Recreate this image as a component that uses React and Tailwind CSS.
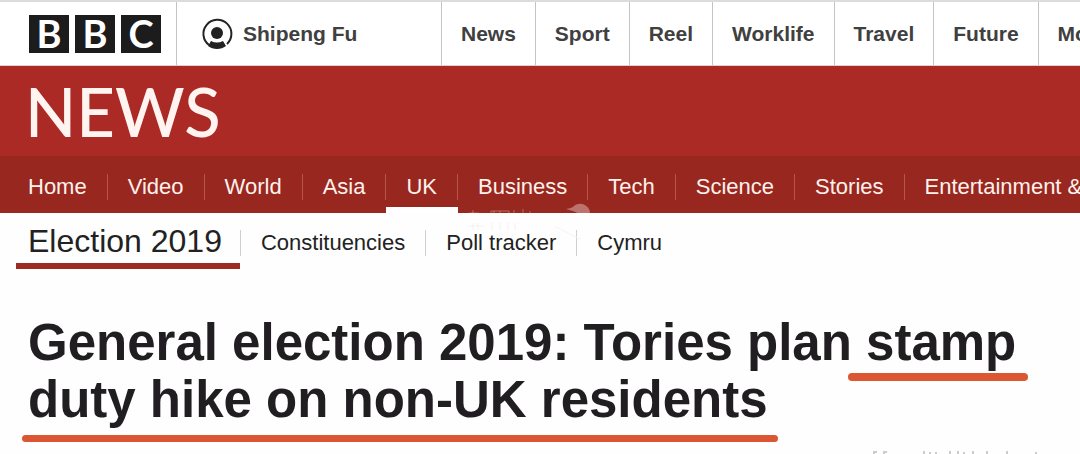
import clsx from 'clsx';

const siteLinks = ['News', 'Sport', 'Reel', 'Worklife', 'Travel', 'Future', 'More'];

const sections = [
  'Home',
  'Video',
  'World',
  'Asia',
  'UK',
  'Business',
  'Tech',
  'Science',
  'Stories',
  'Entertainment & Arts',
];

const topics = ['Constituencies', 'Poll tracker', 'Cymru'];

function AccountIcon() {
  return (
    <svg width="32" height="32" viewBox="0 0 32 32" aria-hidden="true">
      <path
        d="M8 27A14 14 0 1 1 26 26"
        fill="none"
        stroke="#222"
        strokeWidth="2"
      />
      <circle cx="16" cy="15" r="6" fill="#222" />
      <path d="M7 28l3-5c4 2 8 2 12 0l3 5c-5 4-13 4-18 0z" fill="#222" />
    </svg>
  );
}

// faint bird and lettering stamped over the nav
function Watermark() {
  return (
    <svg
      className="pointer-events-none absolute top-[135px] left-[465px]"
      width="140"
      height="45"
      viewBox="0 0 140 45"
      aria-hidden="true"
    >
      <path
        d="M101 8c4-.5 6-1 8-3 5-4 12-2 15 3 2 4 1 9-2 13-3 3-7 4-10 3 4-2 5-6 3-9-2-4-7-5-14-7z"
        fill="#fff"
        opacity="0.35"
      />
      <path
        d="M8 12v-3M4 12h10M26 12v-2h18v2M29 12v-2M35 12v-2M49 12v-3M58 12v-4M65 12v-2"
        fill="none"
        stroke="#fff"
        opacity="0.3"
      />
      <path
        d="M3 25h16M8 22v7M13 22v7M27 22v7M35 22v7M43 22v7M50 22v7"
        fill="none"
        stroke="#f4f1f1"
      />
      <path d="M90 26c10 3 14 8 26 12" fill="none" stroke="#f6f4f4" />
    </svg>
  );
}

function SiteBar() {
  return (
    <header className="flex h-[66px] overflow-hidden border-t-2 border-b border-t-[#dcdcdc] border-b-[#e2cfcd] bg-white">
      <a
        href="#home"
        aria-label="BBC home"
        className="flex w-[177px] shrink-0 items-center gap-[6px] border-r border-[#c4c4c4] pl-[29px]"
      >
        {['B', 'B', 'C'].map((letter, i) => (
          <span
            key={i}
            className="flex h-[38px] w-10 items-center justify-center bg-[#1c1c1c] pb-px font-['Lato',sans-serif] text-[38px] leading-[38px] font-bold text-white"
          >
            {letter}
          </span>
        ))}
      </a>
      <a
        href="#account"
        className="flex w-[265px] shrink-0 items-center gap-[10px] border-r border-[#c4c4c4] pl-6 text-[21px] font-bold text-[#404040]"
      >
        <AccountIcon />
        Shipeng Fu
      </a>
      <nav aria-label="BBC" className="flex">
        {siteLinks.map((label) => (
          <a
            key={label}
            href="#site"
            className="flex shrink-0 items-center border-r border-[#c4c4c4] px-[19px] text-[21px] font-bold text-[#404040]"
          >
            {label}
          </a>
        ))}
      </nav>
    </header>
  );
}

function SectionNav() {
  return (
    <nav aria-label="Sections" className="flex h-[57px] overflow-hidden bg-[#98271f] pt-1 pl-2">
      {sections.map((label) => (
        <a
          key={label}
          href="#section"
          aria-current={label === 'UK' ? 'page' : undefined}
          className={clsx(
            'flex shrink-0 items-center border-b-6 pt-[6px] text-[22px] whitespace-nowrap text-[#fff1ec]',
            label === 'UK' ? 'border-white' : 'border-transparent'
          )}
        >
          <span className="px-5 leading-[26px]">{label}</span>
          <span className="h-[26px] w-px bg-[#b8554b]" />
        </a>
      ))}
    </nav>
  );
}

function TopicNav() {
  return (
    <nav aria-label="Election" className="flex h-14 items-stretch pl-4">
      <a
        href="#election"
        className="border-b-6 border-[#9d2b24] pr-[18px] pl-3 pt-[9px] text-[32px] leading-[38px] whitespace-nowrap text-[#222]"
      >
        Election 2019
      </a>
      {topics.map((label) => (
        <a
          key={label}
          href="#topic"
          className="flex items-center pt-[3px] text-[22px] whitespace-nowrap text-[#222]"
        >
          <span className="h-[26px] w-px bg-[#d0d0d0]" />
          <span className="px-5 leading-[26px]">{label}</span>
        </a>
      ))}
    </nav>
  );
}

export default function App() {
  return (
    <div className="overflow-hidden bg-[#fefefe] font-['Liberation_Sans',Arial,sans-serif]">
      <SiteBar />
      <div className="relative">
        <div className="flex h-[90px] items-center bg-[#ab2a25] pl-[25px]">
          <a
            href="#news"
            className="font-['Lato',sans-serif] text-[67px] leading-[67px] font-medium text-[#fff4f0]"
          >
            NEWS
          </a>
        </div>
        <SectionNav />
        <Watermark />
      </div>
      <TopicNav />
      <main className="px-7 pt-[45px]">
        <h1 className="text-[51px] leading-[57px] font-bold text-[#201e20]">
          General election 2019: Tories plan{' '}
          <span className="relative">
            stamp
            <span className="absolute -right-3 -bottom-[10px] -left-[18px] h-2 rounded-sm bg-[#dc5633]" />
          </span>
          <br />
          <span className="relative">
            duty hike on non-UK residents
            <span className="absolute -right-[10px] -bottom-[14px] -left-[6px] h-[7px] rounded-sm bg-[#dc5633]" />
          </span>
        </h1>
        <div className="flex justify-end pt-[23px] pr-3">
          <svg width="172" height="3" viewBox="0 0 172 3" aria-hidden="true">
            <path
              d="M6 3V1h3M16 3V1h3M56 3V0M62 3V1M68 3V1M82 3V0M90 3V0M96 3V1M105 3V0M119 3V0M139 3V0M168 3V1"
              fill="none"
              stroke="#ccc"
              strokeWidth="2"
            />
          </svg>
        </div>
      </main>
    </div>
  );
}
